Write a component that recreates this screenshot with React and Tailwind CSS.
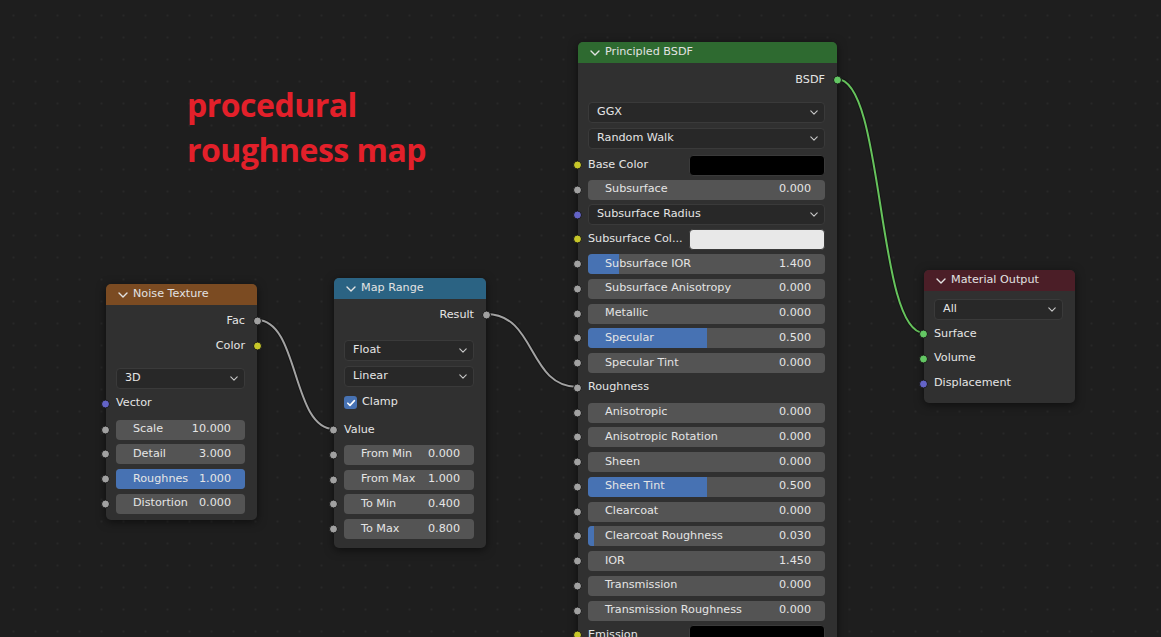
import React from "react";

const SOCKET = {
  gray: "bg-[#a1a1a1]",
  yellow: "bg-[#c7c729]",
  purple: "bg-[#6363c7]",
  green: "bg-[#63c763]",
};

function Socket({ side, color }) {
  const pos = side === "left" ? "left-[-5px]" : "right-[-5px]";
  return (
    <span
      className={`absolute top-1/2 -translate-y-1/2 w-[9px] h-[9px] rounded-full border border-[#1a1a1a] ${pos} ${SOCKET[color]}`}
    />
  );
}

function Row({ socket, side = "left", tall, children }) {
  return (
    <div className={`relative flex items-center pl-[10px] pr-[12px] ${tall ? "h-[26px]" : "h-[24.75px]"}`}>
      {socket && <Socket side={side} color={socket} />}
      {children}
    </div>
  );
}

function Chevron({ className }) {
  return (
    <svg viewBox="0 0 10 6" className={className} fill="none" stroke="currentColor" strokeWidth="1.4" strokeLinecap="round" strokeLinejoin="round">
      <polyline points="1,1 5,5 9,1" />
    </svg>
  );
}

function Slider({ label, value, fill = 0, socket = "gray" }) {
  return (
    <Row socket={socket}>
      <div className="relative flex-1 h-[20px] rounded-[4px] bg-[#545454] overflow-hidden flex items-center">
        {fill > 0 && (
          <div className="absolute inset-y-0 left-0 bg-[#4772b3]" style={{ width: `${fill * 100}%` }} />
        )}
        <span className="relative flex-1 pl-[17px] whitespace-nowrap overflow-hidden">{label}</span>
        <span className="relative pr-[14px]">{value}</span>
      </div>
    </Row>
  );
}

function Dropdown({ label, socket, tall }) {
  return (
    <Row socket={socket} tall={tall}>
      <div className="flex-1 h-[21px] rounded-[4px] bg-[#282828] border border-[#3a3a3a] flex items-center justify-between pl-[8px] pr-[6px]">
        <span>{label}</span>
        <Chevron className="w-[8px] h-[5px] text-[#c8c8c8]" />
      </div>
    </Row>
  );
}

function Label({ label, socket, side = "left" }) {
  return (
    <Row socket={socket} side={side}>
      <span className={`flex-1 whitespace-nowrap ${side === "right" ? "text-right" : ""}`}>{label}</span>
    </Row>
  );
}

function Swatch({ label, color }) {
  return (
    <Row socket="yellow">
      <span className="w-[101px] whitespace-nowrap overflow-hidden">{label}</span>
      <div className={`flex-1 h-[21px] rounded-[4px] border border-[#3a3a3a] ${color}`} />
    </Row>
  );
}

function Node({ title, header, className, children }) {
  return (
    <div className={`absolute rounded-[5px] bg-[#303030] shadow-[0_2px_10px_rgba(0,0,0,0.55)] ${className}`}>
      <div className={`h-[21px] rounded-t-[5px] flex items-center pl-[12px] gap-[5px] text-[#e2e2e2] ${header}`}>
        <Chevron className="w-[10px] h-[6px]" />
        <span>{title}</span>
      </div>
      {children}
    </div>
  );
}

function Wire({ x1, y1, x2, y2, color }) {
  const d = Math.max(30, (x2 - x1) * 0.55);
  const path = `M${x1},${y1} C${x1 + d},${y1} ${x2 - d},${y2} ${x2},${y2}`;
  return (
    <>
      <path d={path} stroke="#151515" strokeWidth="4" fill="none" />
      <path d={path} stroke={color} strokeWidth="2" fill="none" />
    </>
  );
}

export default function App() {
  return (
    <div className="relative w-[1161px] h-[637px] overflow-hidden bg-[#1e1e1e] text-[11.2px] text-[#e5e5e5] font-['DejaVu_Sans',sans-serif]">
      <svg className="absolute inset-0" width="1161" height="637">
        <defs>
          <pattern id="dots" width="22" height="22" patternUnits="userSpaceOnUse">
            <rect x="12.5" y="14.5" width="2" height="2" fill="#282828" />
          </pattern>
        </defs>
        <rect width="1161" height="637" fill="url(#dots)" />
        <Wire x1={257} y1={320} x2={334} y2={429} color="#a3a3a3" />
        <Wire x1={486} y1={314} x2={578} y2={387} color="#a3a3a3" />
        <Wire x1={837} y1={79} x2={924} y2={333} color="#66c35c" />
      </svg>

      <div className="absolute left-[187px] top-[82px] text-[#e3202a] font-['Open_Sans',sans-serif] font-bold text-[32px] leading-[45px] tracking-[-0.5px]">
        <div>procedural</div>
        <div>roughness map</div>
      </div>

      <Node title="Noise Texture" header="bg-[#7b4b22]" className="left-[106px] top-[284px] w-[151px]">
        <div className="pt-[4px] pb-[4px]">
          <Label label="Fac" socket="gray" side="right" />
          <Label label="Color" socket="yellow" side="right" />
          <div className="h-[7px]" />
          <Dropdown label="3D" tall />
          <Label label="Vector" socket="purple" />
          <div className="h-[1px]" />
          <Slider label="Scale" value="10.000" />
          <Slider label="Detail" value="3.000" />
          <Slider label="Roughnes" value="1.000" fill={1} />
          <Slider label="Distortion" value="0.000" />
        </div>
      </Node>

      <Node title="Map Range" header="bg-[#2b6383]" className="left-[334px] top-[278px] w-[152px]">
        <div className="pt-[4px] pb-[6px]">
          <Label label="Result" socket="gray" side="right" />
          <div className="h-[10px]" />
          <Dropdown label="Float" tall />
          <Dropdown label="Linear" tall />
          <Row tall>
            <span className="w-[13px] h-[13px] rounded-[3px] bg-[#4772b3] flex items-center justify-center mr-[5px]">
              <svg viewBox="0 0 10 10" className="w-[10px] h-[10px]" fill="none" stroke="white" strokeWidth="1.6" strokeLinecap="round" strokeLinejoin="round">
                <polyline points="1.8,5.2 4,7.4 8.4,2.6" />
              </svg>
            </span>
            <span>Clamp</span>
          </Row>
          <div className="h-[2px]" />
          <Label label="Value" socket="gray" />
          <Slider label="From Min" value="0.000" />
          <Slider label="From Max" value="1.000" />
          <Slider label="To Min" value="0.400" />
          <Slider label="To Max" value="0.800" />
        </div>
      </Node>

      <Node title="Principled BSDF" header="bg-[#2e6a30]" className="left-[578px] top-[42px] w-[259px]">
        <div className="pt-[5px] pb-[6px]">
          <Label label="BSDF" socket="green" side="right" />
          <div className="h-[7px]" />
          <Dropdown label="GGX" tall />
          <Dropdown label="Random Walk" tall />
          <div className="h-[1px]" />
          <Swatch label="Base Color" color="bg-black" />
          <Slider label="Subsurface" value="0.000" />
          <Dropdown label="Subsurface Radius" socket="purple" />
          <Swatch label="Subsurface Col..." color="bg-[#e8e8e8]" />
          <Slider label="Subsurface IOR" value="1.400" fill={0.13} />
          <Slider label="Subsurface Anisotropy" value="0.000" />
          <Slider label="Metallic" value="0.000" />
          <Slider label="Specular" value="0.500" fill={0.5} />
          <Slider label="Specular Tint" value="0.000" />
          <Label label="Roughness" socket="gray" />
          <Slider label="Anisotropic" value="0.000" />
          <Slider label="Anisotropic Rotation" value="0.000" />
          <Slider label="Sheen" value="0.000" />
          <Slider label="Sheen Tint" value="0.500" fill={0.5} />
          <Slider label="Clearcoat" value="0.000" />
          <Slider label="Clearcoat Roughness" value="0.030" fill={0.025} />
          <Slider label="IOR" value="1.450" />
          <Slider label="Transmission" value="0.000" />
          <Slider label="Transmission Roughness" value="0.000" />
          <Swatch label="Emission" color="bg-black" />
          <Slider label="Emission Strength" value="1.000" />
          <Slider label="Alpha" value="1.000" fill={1} />
        </div>
      </Node>

      <Node title="Material Output" header="bg-[#4b1e27]" className="left-[924px] top-[270px] w-[151px]">
        <div className="pt-[6px] pb-[7px]">
          <Dropdown label="All" />
          <Label label="Surface" socket="green" />
          <Label label="Volume" socket="green" />
          <Label label="Displacement" socket="purple" />
        </div>
      </Node>
    </div>
  );
}
